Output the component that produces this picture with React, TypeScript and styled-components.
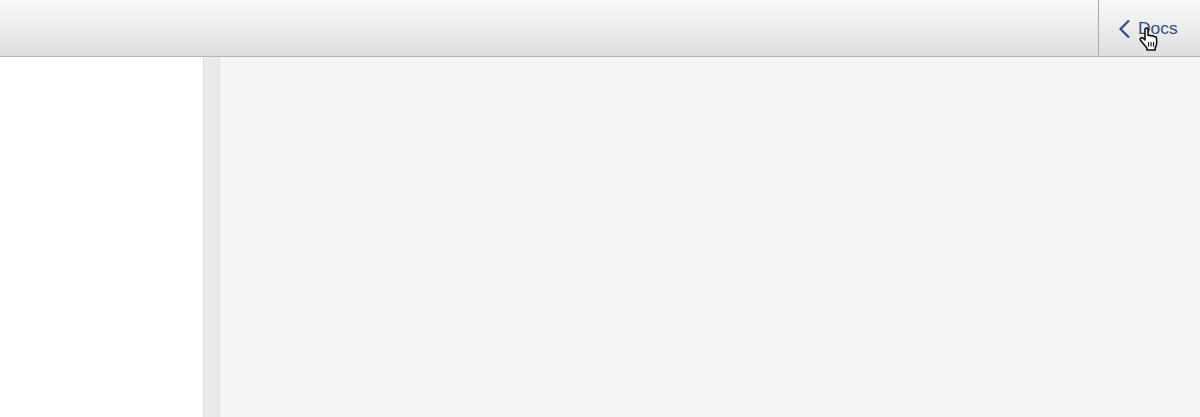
import React from "react";
import styled, { createGlobalStyle } from "styled-components";

const Global = createGlobalStyle`
  html, body { margin: 0; padding: 0; height: 100%; overflow: hidden; background: #fff; }
  #root { height: 100%; }
`;

const Page = styled.div`
  width: 1200px;
  height: 417px;
  display: flex;
  flex-direction: column;
  font-family: "Liberation Sans", Arial, sans-serif;
`;

const Toolbar = styled.header`
  height: 57px;
  box-sizing: border-box;
  flex: none;
  display: flex;
  justify-content: flex-end;
  background: linear-gradient(180deg, #f7f7f7 0%, #f0f0f0 35%, #dedede 100%);
  border-bottom: 1px solid #b6b6b6;
`;

const DocsButton = styled.a`
  position: relative;
  width: 102px;
  display: flex;
  align-items: center;
  gap: 8px;
  padding-left: 19px;
  padding-top: 1px;
  box-sizing: border-box;
  border-left: 1px solid #ababab;
  color: #304b86;
  font-size: 17.4px;
  cursor: pointer;
`;

const Cursor = styled.svg`
  position: absolute;
  left: 40px;
  top: 27px;
`;

const Body = styled.main`
  flex: 1;
  display: flex;
  min-height: 0;
`;

const Sidebar = styled.aside`
  width: 203px;
  flex: none;
  background: #fff;
`;

const Divider = styled.div`
  width: 15px;
  flex: none;
  background: #ebebeb;
  border-left: 1px solid #e0e0e0;
  border-right: 1px solid #e0e0e0;
`;

const Content = styled.section`
  flex: 1;
  background: #f5f5f8;
`;

export default function App() {
  return (
    <Page>
      <Global />
      <Toolbar>
        <DocsButton>
          <svg width="12" height="20" viewBox="0 0 12 20" fill="none">
            <path d="M11 1.500 L2.500 10 L11 18.500" stroke="#304b86" strokeWidth="2.200" />
          </svg>
          Docs
          <Cursor width="20" height="24" viewBox="0 0 20 24">
            <path
              d="M6 2.500c0-1.800 3-1.800 3 0v6c1-.6 2.400-.4 2.900.5 1-.5 2.400-.2 2.900.7 1.100-.4 2.600.2 2.700 1.600l.2 4.200c0 2.500-.8 3.800-1.500 5.200v2.300H8v-1.800C6.500 19 3.500 16 1.500 13.200c-1-1.600 1-3.400 2.600-2L6 13V2.500z"
              fill="#fff"
              stroke="#111"
              strokeWidth="1.600"
              strokeLinejoin="round"
            />
            <path d="M9.500 15v4.500M12 15v4.500M14.500 15v4.500" stroke="#111" strokeWidth="1.200" />
          </Cursor>
        </DocsButton>
      </Toolbar>
      <Body>
        <Sidebar />
        <Divider />
        <Content />
      </Body>
    </Page>
  );
}
